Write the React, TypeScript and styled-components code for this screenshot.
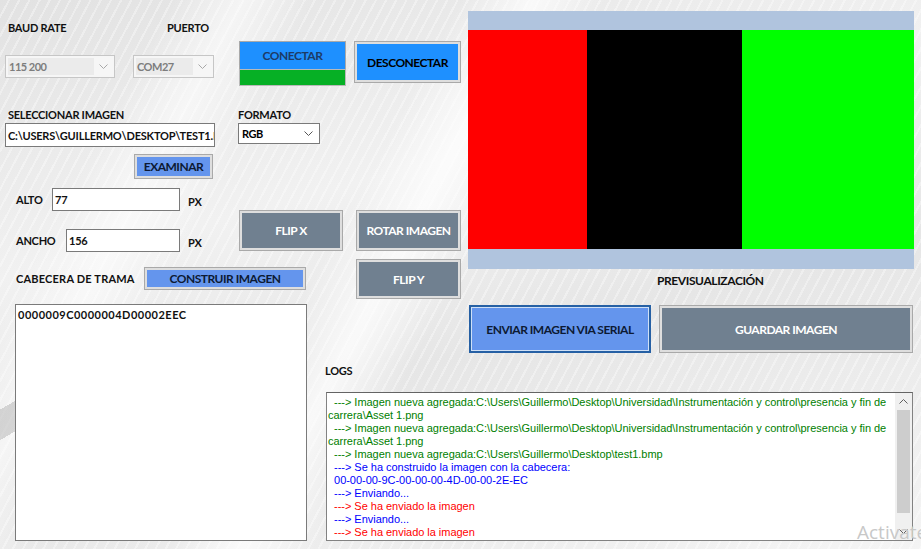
import React from 'react';
import styled, { createGlobalStyle } from 'styled-components';

type Tone = 'dodger' | 'cornflower' | 'slate';
type LogKind = 'ok' | 'info' | 'sent';

const GlobalStyle = createGlobalStyle`
  html, body {
    margin: 0;
    padding: 0;
    background: #ececec;
  }
  * {
    box-sizing: border-box;
  }
`;

const Form = styled.div`
  position: relative;
  width: 921px;
  height: 549px;
  overflow: hidden;
  font-family: Lato, 'Liberation Sans', sans-serif;
  color: #111;
  background:
    linear-gradient(150deg, transparent 0 35%, rgba(150, 150, 150, 0.35) 35% 62%, transparent 62%) 0 370px / 40px 90px no-repeat,
    linear-gradient(118deg, transparent 0 38%, rgba(255, 255, 255, 0.75) 44%, transparent 50%),
    linear-gradient(118deg, transparent 0 14%, rgba(255, 255, 255, 0.6) 20%, transparent 26%),
    repeating-linear-gradient(118deg, rgba(255, 255, 255, 0) 0 7px, rgba(255, 255, 255, 0.35) 7px 9px),
    linear-gradient(165deg, #e2e2e2 0%, #f1f1f1 35%, #e6e6e6 60%, #f4f4f4 100%);
`;

const TopSection = styled.div`
  display: flex;
  height: 304px;
`;

const ControlsPane = styled.div`
  width: 468px;
  display: flex;
  flex-direction: column;
  padding-top: 21px;
`;

const Row = styled.div<{ $gap: number }>`
  display: flex;
  align-items: flex-start;
  margin-top: ${(p) => p.$gap}px;
`;

const Field = styled.div<{ $left: number; $width: number; $gap: number }>`
  display: flex;
  flex-direction: column;
  margin-left: ${(p) => p.$left}px;
  width: ${(p) => p.$width}px;
  gap: ${(p) => p.$gap}px;
`;

const Caption = styled.div<{ $indent?: number }>`
  height: 14px;
  line-height: 14px;
  padding-left: ${(p) => p.$indent ?? 0}px;
  font-size: 11px;
  font-weight: 700;
  letter-spacing: -0.25px;
  white-space: nowrap;
`;

const ComboBox = styled.div<{ $disabled?: boolean; $h: number }>`
  display: flex;
  height: ${(p) => p.$h}px;
  padding: 2px;
  border: 1px solid ${(p) => (p.$disabled ? '#c6c6c6' : '#7a7a7a')};
  background: ${(p) => (p.$disabled ? '#f6f6f6' : '#fff')};
`;

const ComboText = styled.div<{ $disabled?: boolean }>`
  flex: 1;
  display: flex;
  align-items: center;
  padding-left: 1px;
  background: ${(p) => (p.$disabled ? '#ebebeb' : 'transparent')};
  color: ${(p) => (p.$disabled ? '#7d7d7d' : '#000')};
  font-size: 11px;
  font-weight: 700;
  letter-spacing: -0.5px;
`;

const ComboArrow = styled.div`
  width: 18px;
  display: flex;
  align-items: center;
  justify-content: center;
`;

const TextBox = styled.div<{ $w?: number; $h: number }>`
  display: flex;
  align-items: center;
  width: ${(p) => (p.$w ? `${p.$w}px` : 'auto')};
  height: ${(p) => p.$h}px;
  padding-left: 2px;
  border: 1px solid #7a7a7a;
  background: #fff;
  font-size: 11px;
  font-weight: 700;
  letter-spacing: -0.2px;
  white-space: nowrap;
  overflow: hidden;
`;

const tones: Record<Tone, { bg: string; fg: string }> = {
  dodger: { bg: '#1e90ff', fg: '#000' },
  cornflower: { bg: '#6495ed', fg: '#0d1a33' },
  slate: { bg: '#708090', fg: '#fff' },
};

const ActionButton = styled.button<{ $tone: Tone; $w: number; $h: number; $focused?: boolean }>`
  display: flex;
  align-items: center;
  justify-content: center;
  flex-shrink: 0;
  width: ${(p) => p.$w}px;
  height: ${(p) => p.$h}px;
  padding: 0;
  border: ${(p) => (p.$focused ? '2px solid #2660a4' : '1px solid #a9a9a9')};
  box-shadow: inset 0 0 0 ${(p) => (p.$focused ? '1px #cfe0f6' : '2px #dedede')};
  background: ${(p) => tones[p.$tone].bg};
  color: ${(p) => tones[p.$tone].fg};
  font-family: Lato, 'Liberation Sans', sans-serif;
  font-size: 12px;
  font-weight: 700;
  letter-spacing: -0.5px;
  white-space: nowrap;
  cursor: pointer;
`;

const ConnectStack = styled.div`
  display: flex;
  flex-direction: column;
  width: 107px;
  margin: 20px 0 0 25px;
`;

const ConnectButton = styled(ActionButton)`
  color: #1d3b66;
  box-shadow: none;
  border-bottom: none;
`;

const StatusBar = styled.div`
  height: 17px;
  border: 1px solid #b9b9b9;
  background: #06b025;
`;

const DisconnectSlot = styled.div`
  margin: 20px 0 0 8px;
`;

const BrowseSlot = styled.div`
  margin: 6px 0 0 129px;
`;

const DimsColumn = styled.div`
  width: 239px;
  display: flex;
  flex-direction: column;
  gap: 18px;
`;

const DimRow = styled.div`
  display: flex;
  align-items: center;
  height: 23px;
  padding-left: 16px;
`;

const DimCaption = styled(Caption)<{ $w: number }>`
  width: ${(p) => p.$w}px;
`;

const UnitCaption = styled(Caption)`
  margin: 5px 0 0 8px;
`;

const FlipRow = styled.div`
  display: flex;
  gap: 13px;
  margin-top: 22px;
`;

const HeaderRow = styled.div`
  display: flex;
  align-items: center;
  margin-top: 8px;
  padding-left: 16px;
`;

const HeaderCaption = styled(Caption)`
  width: 128px;
  letter-spacing: 0.2px;
`;

const FlipYSlot = styled.div`
  margin-left: 50px;
`;

const PreviewPane = styled.div`
  width: 446px;
  margin-top: 11px;
  display: flex;
  flex-direction: column;
`;

const PreviewFrame = styled.div`
  height: 258px;
  padding: 19px 0 20px;
  background: #b0c4de;
`;

const PreviewImage = styled.div`
  display: flex;
  height: 219px;
`;

const Stripe = styled.div<{ $color: string }>`
  height: 100%;
  background: ${(p) => p.$color};
`;

const PreviewCaption = styled(Caption)`
  margin-top: 5px;
  padding-left: 189px;
  font-size: 12px;
  letter-spacing: -0.4px;
`;

const BottomSection = styled.div`
  display: flex;
`;

const HeaderBox = styled.div`
  width: 292px;
  height: 237px;
  margin-left: 15px;
  padding: 3px 2px;
  border: 1px solid #7a7a7a;
  background: #fff;
  font-size: 11px;
  font-weight: 700;
  line-height: 14px;
  letter-spacing: 0.5px;
`;

const RightColumn = styled.div`
  width: 587px;
  margin-left: 19px;
  display: flex;
  flex-direction: column;
`;

const SendRow = styled.div`
  display: flex;
  gap: 8px;
  margin: 1px 0 0 143px;
`;

const LogsCaption = styled(Caption)`
  margin: 11px 0 0 -1px;
`;

const LogBox = styled.div`
  display: flex;
  height: 149px;
  margin-top: 14px;
  border: 1px solid #828282;
  border-top-color: #646464;
  background: #fff;
`;

const LogText = styled.div`
  flex: 1;
  overflow: hidden;
  padding: 3px 0 0 1px;
  font-family: 'Liberation Sans', Arial, sans-serif;
  font-size: 11px;
  line-height: 13px;
  letter-spacing: -0.03px;
`;

const logColors: Record<LogKind, string> = {
  ok: '#008000',
  info: '#0000ff',
  sent: '#ff0000',
};

const LogLine = styled.div<{ $kind: LogKind }>`
  white-space: pre;
  color: ${(p) => logColors[p.$kind]};
`;

const ScrollBar = styled.div`
  width: 17px;
  display: flex;
  flex-direction: column;
  background: #f0f0f0;
`;

const ScrollArrow = styled.div`
  height: 17px;
  display: flex;
  align-items: center;
  justify-content: center;
`;

const ScrollThumb = styled.div`
  height: 103px;
  margin: 0 2px 10px;
  background: #cdcdcd;
`;

const Watermark = styled.div`
  position: absolute;
  left: 857px;
  top: 523px;
  font-family: 'Open Sans', sans-serif;
  font-size: 19px;
  line-height: 19px;
  color: #c8c8c8;
  white-space: nowrap;
`;

const Chevron = ({ color, up }: { color: string; up?: boolean }) => (
  <svg width="9" height="5" viewBox="0 0 9 5">
    <polyline
      points={up ? '0.5,4.5 4.5,0.5 8.5,4.5' : '0.5,0.5 4.5,4.5 8.5,0.5'}
      fill="none"
      stroke={color}
      strokeWidth="1"
    />
  </svg>
);

const stripes = [
  { color: '#ff0000', width: 119 },
  { color: '#000000', width: 155 },
  { color: '#00ff00', width: 172 },
];

const assetPath =
  '  ---> Imagen nueva agregada:C:\\Users\\Guillermo\\Desktop\\Universidad\\Instrumentación y control\\presencia y fin de';

const logs: { kind: LogKind; text: string }[] = [
  { kind: 'ok', text: assetPath },
  { kind: 'ok', text: 'carrera\\Asset 1.png' },
  { kind: 'ok', text: assetPath },
  { kind: 'ok', text: 'carrera\\Asset 1.png' },
  { kind: 'ok', text: '  ---> Imagen nueva agregada:C:\\Users\\Guillermo\\Desktop\\test1.bmp' },
  { kind: 'info', text: '  ---> Se ha construido la imagen con la cabecera:' },
  { kind: 'info', text: '  00-00-00-9C-00-00-00-4D-00-00-2E-EC' },
  { kind: 'info', text: '  ---> Enviando...' },
  { kind: 'sent', text: '  ---> Se ha enviado la imagen' },
  { kind: 'info', text: '  ---> Enviando...' },
  { kind: 'sent', text: '  ---> Se ha enviado la imagen' },
];

const App = () => {
  return (
    <Form>
      <GlobalStyle />
      <TopSection>
        <ControlsPane>
          <Row $gap={0}>
            <Field $left={5} $width={110} $gap={20}>
              <Caption $indent={3}>BAUD RATE</Caption>
              <ComboBox $disabled $h={23}>
                <ComboText $disabled>115 200</ComboText>
                <ComboArrow>
                  <Chevron color="#a8a8a8" />
                </ComboArrow>
              </ComboBox>
            </Field>
            <Field $left={18} $width={81} $gap={20}>
              <Caption $indent={34}>PUERTO</Caption>
              <ComboBox $disabled $h={23}>
                <ComboText $disabled>COM27</ComboText>
                <ComboArrow>
                  <Chevron color="#a8a8a8" />
                </ComboArrow>
              </ComboBox>
            </Field>
            <ConnectStack>
              <ConnectButton $tone="dodger" $w={107} $h={28}>
                CONECTAR
              </ConnectButton>
              <StatusBar />
            </ConnectStack>
            <DisconnectSlot>
              <ActionButton $tone="dodger" $w={107} $h={42}>
                DESCONECTAR
              </ActionButton>
            </DisconnectSlot>
          </Row>

          <Row $gap={22}>
            <Field $left={5} $width={210} $gap={1}>
              <Caption $indent={3}>SELECCIONAR IMAGEN</Caption>
              <TextBox $h={24}>C:\USERS\GUILLERMO\DESKTOP\TEST1.BMP</TextBox>
              <BrowseSlot>
                <ActionButton $tone="cornflower" $w={79} $h={25}>
                  EXAMINAR
                </ActionButton>
              </BrowseSlot>
            </Field>
            <Field $left={23} $width={82} $gap={1}>
              <Caption>FORMATO</Caption>
              <ComboBox $h={21}>
                <ComboText>RGB</ComboText>
                <ComboArrow>
                  <Chevron color="#555" />
                </ComboArrow>
              </ComboBox>
            </Field>
          </Row>

          <Row $gap={9}>
            <DimsColumn>
              <DimRow>
                <DimCaption $w={36}>ALTO</DimCaption>
                <TextBox $w={128} $h={23}>77</TextBox>
                <UnitCaption>PX</UnitCaption>
              </DimRow>
              <DimRow>
                <DimCaption $w={50}>ANCHO</DimCaption>
                <TextBox $w={114} $h={23}>156</TextBox>
                <UnitCaption>PX</UnitCaption>
              </DimRow>
            </DimsColumn>
            <FlipRow>
              <ActionButton $tone="slate" $w={104} $h={41}>
                FLIP X
              </ActionButton>
              <ActionButton $tone="slate" $w={105} $h={41}>
                ROTAR IMAGEN
              </ActionButton>
            </FlipRow>
          </Row>

          <Row $gap={7}>
            <HeaderRow>
              <HeaderCaption>CABECERA DE TRAMA</HeaderCaption>
              <ActionButton $tone="cornflower" $w={162} $h={23}>
                CONSTRUIR IMAGEN
              </ActionButton>
            </HeaderRow>
            <FlipYSlot>
              <ActionButton $tone="slate" $w={105} $h={40}>
                FLIP Y
              </ActionButton>
            </FlipYSlot>
          </Row>
        </ControlsPane>

        <PreviewPane>
          <PreviewFrame>
            <PreviewImage>
              {stripes.map((s) => (
                <Stripe key={s.color} $color={s.color} style={{ width: s.width }} />
              ))}
            </PreviewImage>
          </PreviewFrame>
          <PreviewCaption>PREVISUALIZACIÓN</PreviewCaption>
        </PreviewPane>
      </TopSection>

      <BottomSection>
        <HeaderBox>0000009C0000004D00002EEC</HeaderBox>
        <RightColumn>
          <SendRow>
            <ActionButton $tone="cornflower" $w={182} $h={48} $focused>
              ENVIAR IMAGEN VIA SERIAL
            </ActionButton>
            <ActionButton $tone="slate" $w={254} $h={48}>
              GUARDAR IMAGEN
            </ActionButton>
          </SendRow>
          <LogsCaption>LOGS</LogsCaption>
          <LogBox>
            <LogText>
              {logs.map((l, i) => (
                <LogLine key={i} $kind={l.kind}>
                  {l.text}
                </LogLine>
              ))}
            </LogText>
            <ScrollBar>
              <ScrollArrow>
                <Chevron color="#606060" up />
              </ScrollArrow>
              <ScrollThumb />
              <ScrollArrow>
                <Chevron color="#606060" />
              </ScrollArrow>
            </ScrollBar>
          </LogBox>
        </RightColumn>
      </BottomSection>

      <Watermark>Activate Windows</Watermark>
    </Form>
  );
};

export default App;
